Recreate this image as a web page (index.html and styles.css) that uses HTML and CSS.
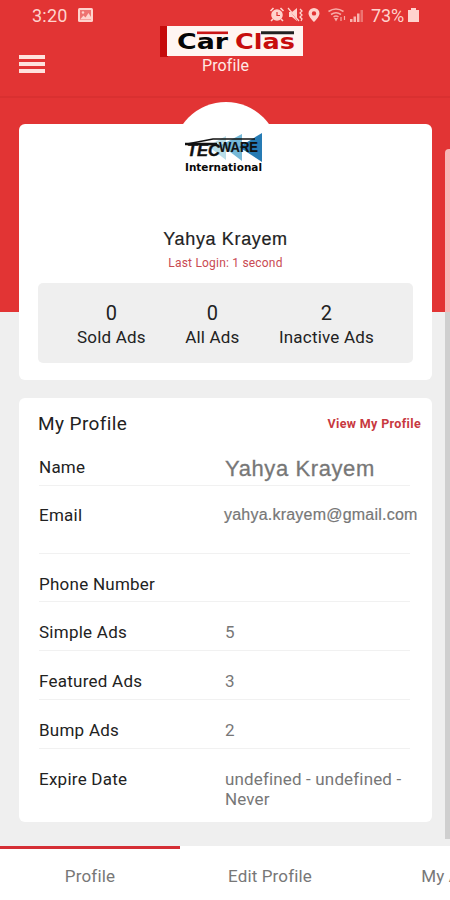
FILE: index.html
```html
<!DOCTYPE html>
<html lang="en">
<head>
<meta charset="utf-8">
<title>Profile</title>
<link rel="stylesheet" href="styles.css">
</head>
<body>
<div class="app">
  <header class="header">
    <div class="status">
      <span class="time">3:20</span>
      <svg class="photo" width="15" height="14" viewBox="0 0 15 14"><rect width="15" height="14" rx="1.5" fill="currentColor"/><path d="M2 2h11v10H2z" fill="#e23434" opacity=".6"/><path d="M2 11.500l3.500-4 2 2L10.500 5 13 9v2.500z" fill="currentColor"/><circle cx="5" cy="4.500" r="1.200" fill="currentColor"/></svg>
      <svg class="tray" width="80" height="16" viewBox="0 0 80 16" fill="none" stroke="currentColor" stroke-width="1.6">
        <circle cx="8" cy="8" r="5" fill="currentColor"/><path d="M1.500 4l3-3M11.500 1l3 3M4 12l-2 2M12 12l2 2"/><path d="M8 5v3.500h3" stroke="#e23434" stroke-width="1.200"/>
        <path d="M20 5h3l5-4v13l-5-4h-3z" fill="currentColor" stroke="none"/><path d="M20 2l9 12" stroke="#e23434" stroke-width="1"/><path d="M19 1l11 13" stroke-width="1.200"/><path d="M31 2l2 2-2 2 2 2-2 2 2 2-1 2" stroke-width="1.300"/>
        <path fill-rule="evenodd" d="M45 1a5.500 5.500 0 0 0-5.500 5.500C39.500 10 45 15 45 15s5.500-5 5.500-8.500A5.500 5.500 0 0 0 45 1zm0 3.200a2.200 2.200 0 1 1 0 4.400 2.200 2.200 0 0 1 0-4.400z" fill="currentColor" stroke="none"/>
        <g opacity=".75"><path d="M59.500 4.500q7.500-5 15 0M62 7.500q5-3.500 10 0M64.500 10q2.500-2 5 0"/><path d="M65 11h4l-2 3.500z" fill="currentColor" stroke="none"/><path d="M72 10v4M75.500 9v4" stroke-width="1.200"/></g>
      </svg>
      <svg class="signal" width="14" height="14" viewBox="0 0 14 14" fill="currentColor"><path d="M0 11h2.500v3H0zM3.500 8.500H6V14H3.500zM7 5.500h2.500V14H7z" opacity=".8"/><path d="M10.500 2H13v12h-2.500z" opacity=".4"/></svg>
      <span class="percent">73%</span>
      <svg class="battery" width="11" height="14" viewBox="0 0 11 14" fill="currentColor"><path d="M3 0h5v2h3v12H0V2h3z"/></svg>
    </div>
    <div class="bar">
      <button class="menu" aria-label="Menu"><i></i><i></i><i></i></button>
      <div class="brand">
        <svg class="logo" width="144" height="33" viewBox="0 0 144 33">
          <path fill="#c60b0b" d="M0 1h8v31H0z"/><path fill="#fff5f2" d="M7 1h136v30H7z"/>
          <path d="M37 7.800h31" stroke="#c91616" stroke-width="2.600"/><path d="M101 7.800h33" stroke="#222" stroke-width="3"/>
          <text x="17" y="23.500" textLength="51" lengthAdjust="spacingAndGlyphs" fill="#050505">Car</text>
          <text x="75" y="23.500" textLength="60" lengthAdjust="spacingAndGlyphs" fill="#c70d0d">Clas</text>
        </svg>
        <h1>Profile</h1>
      </div>
    </div>
  </header>
  <main class="content">
    <section class="card summary">
      <div class="avatar">
        <svg width="82" height="46" viewBox="0 0 82 46">
          <path fill="#b8dde8" d="M44 5v24L26 15z"/><path fill="#75b8d7" d="M60 3v27L39 14z"/><path fill="#267bb4" d="M80 2v29L57 16z"/>
          <path d="M5 13L31 8h42" fill="none" stroke="#111" stroke-width="1.300"/><path d="M3 13h32" stroke="#111" stroke-width="2.500"/>
          <text class="tec" x="5" y="25" textLength="33" lengthAdjust="spacingAndGlyphs">TEC</text>
          <text class="ware" x="37" y="21" textLength="39" lengthAdjust="spacingAndGlyphs">WARE</text>
          <text class="intl" x="3" y="40" textLength="77" lengthAdjust="spacingAndGlyphs">International</text>
        </svg>
      </div>
      <h2>Yahya Krayem</h2>
      <p class="login">Last Login: 1 second</p>
      <div class="stats">
        <div><b>0</b><span>Sold Ads</span></div>
        <div><b>0</b><span>All Ads</span></div>
        <div><b>2</b><span>Inactive Ads</span></div>
      </div>
    </section>
    <section class="card details">
      <div class="heading"><h3>My Profile</h3><a>View My Profile</a></div>
      <dl>
        <div class="row name"><dt>Name</dt><dd>Yahya Krayem</dd></div>
        <div class="row email"><dt>Email</dt><dd>yahya.krayem@gmail.com</dd></div>
        <div class="row phone"><dt>Phone Number</dt><dd></dd></div>
        <div class="row"><dt>Simple Ads</dt><dd>5</dd></div>
        <div class="row"><dt>Featured Ads</dt><dd>3</dd></div>
        <div class="row"><dt>Bump Ads</dt><dd>2</dd></div>
        <div class="row expire"><dt>Expire Date</dt><dd>undefined - undefined - Never</dd></div>
      </dl>
    </section>
    <div class="scrollbar"></div>
  </main>
  <nav class="tabs"><a class="active">Profile</a><a>Edit Profile</a><a>My Ads</a></nav>
</div>
</body>
</html>
```
FILE: styles.css
```css
* { box-sizing: border-box; margin: 0; padding: 0; }
body { width: 450px; height: 900px; overflow: hidden; font-family: Roboto, sans-serif; color: #222; }
.app { width: 450px; height: 900px; display: flex; flex-direction: column; overflow: hidden; }
.header { height: 98px; background: #e23434; border-bottom: 2px solid #d93030; color: #ffd3cd; }
.status { height: 25px; padding: 6px 30px 0 32px; display: flex; align-items: flex-start; }
.time { width: 46px; font-size: 18px; line-height: 19px; letter-spacing: .2px; }
.photo { margin-top: 2px; }
.tray { margin: 1px 0 0 176px; }
.signal { margin: 2px 0 0 1px; }
.percent { margin-left: 7px; width: 36px; font-size: 18px; line-height: 19px; white-space: nowrap; letter-spacing: -.1px; }
.battery { margin: 2px 0 0 1px; }
.bar { display: grid; grid-template-columns: 160px 144px; }
.menu { width: 26px; height: 18px; margin: 30px 0 0 19px; display: flex; flex-direction: column; justify-content: space-between; background: none; border: 0; }
.menu i { height: 4px; background: #ffe2dd; }
.brand { display: flex; flex-direction: column; }
.logo { display: block; }
.logo text { font: bold 22px "DejaVu Sans", sans-serif; }
.brand h1 { width: 131px; text-align: center; font-size: 16px; line-height: 16px; font-weight: 400; letter-spacing: .1px; color: #ffe9e5; }
.content { position: relative; height: 748px; padding: 26px 18px 0 19px; background: linear-gradient(#e23434 214px, #efefef 214px); }
.card { background: #fff; border-radius: 6px; }
.summary { height: 256px; padding: 0 19px; display: flex; flex-direction: column; align-items: center; }
.avatar { width: 106px; height: 106px; margin-top: -22px; display: flex; justify-content: center; align-items: flex-start; padding-top: 29px; background: #fff; border-radius: 50%; }
.avatar svg { flex: none; margin-left: -5px; overflow: visible; }
.tec { font: italic bold 16px "Liberation Sans", sans-serif; fill: #111; stroke: #111; stroke-width: .4; }
.ware { font: bold 15px "Liberation Sans", sans-serif; fill: #111; stroke: #111; stroke-width: .2; }
.intl { font: bold 11px "DejaVu Sans", sans-serif; fill: #080808; }
.summary h2 { margin-top: 20px; font: 400 18px/22px "Liberation Sans", sans-serif; letter-spacing: .65px; -webkit-text-stroke: .2px #222; }
.login { margin-top: 5px; font-size: 12px; line-height: 16px; letter-spacing: .2px; color: #c94a52; }
.stats { width: 375px; height: 80px; margin-top: 12px; padding: 18px 39px 0 39px; display: flex; justify-content: space-between; background: #efefef; border-radius: 5px; }
.stats div { display: flex; flex-direction: column; align-items: center; }
.stats b { font-size: 20px; line-height: 24px; font-weight: 400; }
.stats span { font-size: 17px; line-height: 25px; letter-spacing: .2px; }
.details { height: 424px; margin-top: 18px; padding: 14px 11px 0 19px; }
.heading { height: 31px; display: flex; justify-content: space-between; }
h3 { font-size: 19px; line-height: 24px; font-weight: 400; letter-spacing: .4px; }
.heading a { font-size: 12.500px; line-height: 24px; font-weight: 700; letter-spacing: .35px; color: #c83840; }
dl { width: 372px; padding-left: 1px; }
.row { height: 49px; padding-top: 20px; display: grid; grid-template-columns: 186px 1fr; border-bottom: 1px solid #f1f1f1; font-size: 17px; line-height: 20px; }
dt { font-size: 17px; letter-spacing: .25px; }
dd { color: #777; letter-spacing: .15px; line-height: 20px; }
.name { height: 43px; padding-top: 13px; }
.name dt { line-height: 22px; }
.name dd { font: 22px/25px "Liberation Sans", sans-serif; letter-spacing: .6px; white-space: nowrap; -webkit-text-stroke: .3px #777; }
.email { height: 68px; padding-top: 19px; }
.email dd { font: 16px/19px "Liberation Sans", sans-serif; letter-spacing: .22px; margin-left: -1px; white-space: nowrap; -webkit-text-stroke: .2px #777; }
.phone { height: 48px; }
.expire { border: 0; height: 70px; }
.scrollbar { position: absolute; right: 0; top: 51px; width: 5px; height: 690px; background: linear-gradient(rgba(255, 225, 225, .75) 163px, #cfcfcf 163px); border-radius: 4px 0 0; }
.tabs { height: 54px; display: flex; background: #fff; }
.tabs a { flex: 0 0 180px; text-align: center; padding-top: 17px; border-top: 3px solid #fff; font-size: 17px; line-height: 20px; color: #777; letter-spacing: .15px; }
.tabs .active { border-color: #d52f35; }
```
